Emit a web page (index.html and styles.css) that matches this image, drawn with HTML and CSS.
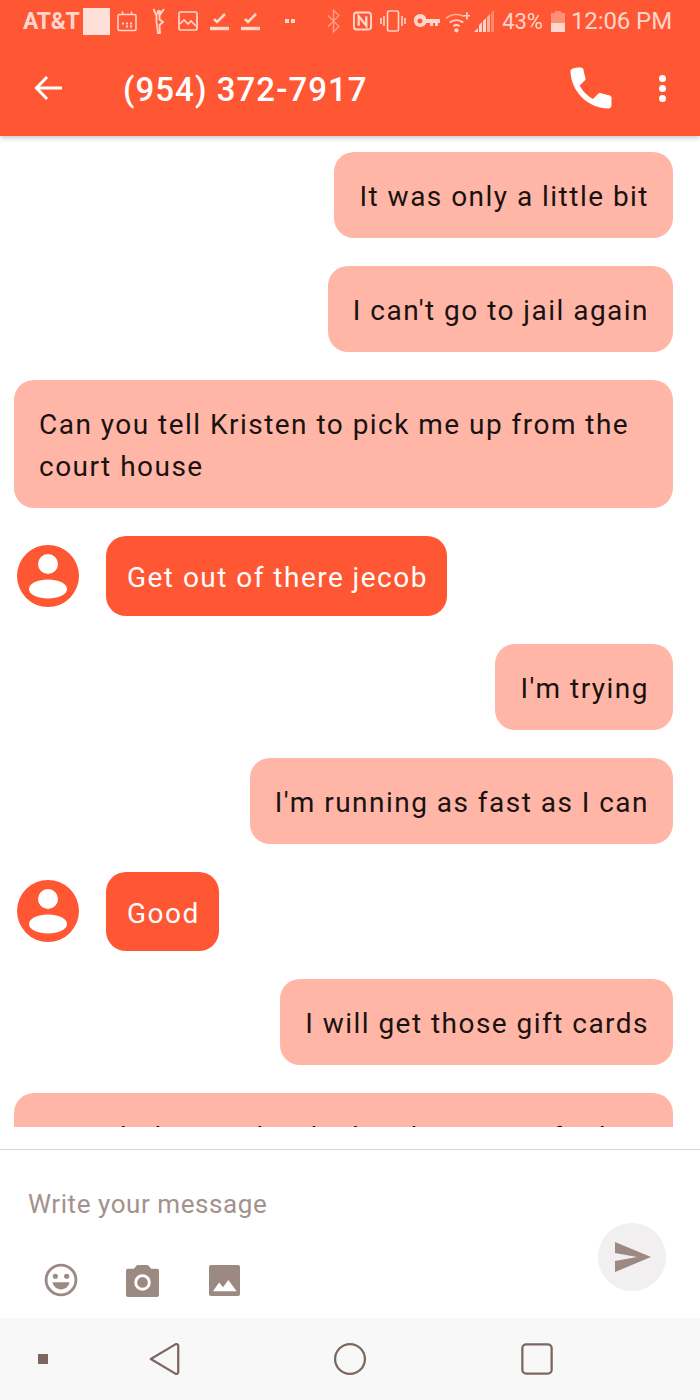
FILE: index.html
```html
<!DOCTYPE html>
<html lang="en">
<head>
<meta charset="utf-8">
<title>(954) 372-7917</title>
<link rel="stylesheet" href="styles.css">
</head>
<body>
<div class="phone">
  <header class="top">
    <div class="status">
      <div class="status-left">
        <span class="carrier">AT&amp;T</span>
        <span class="block"></span>
        <svg class="si s-cal" viewBox="0 0 20 20"><rect x="1" y="3" width="18" height="16" rx="1.500" fill="none" stroke="currentColor" stroke-width="1.500"/><path d="M5.500 0v3.500M14.500 0v3.500" stroke="currentColor" stroke-width="1.500"/><path d="M5 11h2v2H5zM9 11h2v2H9zM13 11h2v2h-2zM9 14h2v2H9zM13 14h2v2h-2z" fill="currentColor"/></svg>
        <svg class="si s-yoga" viewBox="0 0 14 26"><path d="M1.500 1l3 6.500V14l1.500 11h2l-.5-8 3.500-3-3.500-2.500V7.500L12 1" fill="none" stroke="currentColor" stroke-width="1.800"/><circle cx="7" cy="4.500" r="2.400" fill="currentColor"/></svg>
        <svg class="si s-pic" viewBox="0 0 20 20"><rect x="1" y="1" width="18" height="18" rx="1.500" fill="none" stroke="currentColor" stroke-width="1.700"/><path d="M2 13l4-4 4 4 3-3 5 5" fill="none" stroke="currentColor" stroke-width="1.700"/></svg>
        <svg class="si s-check" viewBox="0 0 19 20"><path d="M4 8l3 3 8-8" fill="none" stroke="currentColor" stroke-width="2.600"/><path d="M0 17.500h19" stroke="currentColor" stroke-width="3.400"/></svg>
        <svg class="si s-check" viewBox="0 0 19 20"><path d="M4 8l3 3 8-8" fill="none" stroke="currentColor" stroke-width="2.600"/><path d="M0 17.500h19" stroke="currentColor" stroke-width="3.400"/></svg>
        <span class="dots"><i></i><i></i></span>
      </div>
      <div class="status-right">
        <svg class="si s-bt" viewBox="0 0 12 22"><path d="M1 6l10 10-5 5V1l5 5L1 16" fill="none" stroke="currentColor" stroke-width="1.300" opacity=".55"/></svg>
        <svg class="si s-nfc" viewBox="0 0 20 20"><rect x="1" y="1" width="18" height="18" rx="3" fill="none" stroke="currentColor" stroke-width="2"/><path d="M6 15V5l8 10V5" fill="none" stroke="currentColor" stroke-width="2.400"/></svg>
        <svg class="si s-vib" viewBox="0 0 26 22"><rect x="7.500" y="1" width="11" height="20" rx="1.500" fill="none" stroke="currentColor" stroke-width="1.600"/><path d="M4 6v10M1 8v6M22 6v10M25 8v6" stroke="currentColor" stroke-width="1.600"/></svg>
        <svg class="si s-key" viewBox="0 0 27 14"><path d="M7 0a6.500 6.500 0 0 1 6.300 5H27v4h-2v3h-3V9h-2v3h-3V9h-3.700A6.500 6.500 0 1 1 7 0zm0 4.500a2.500 2.500 0 1 0 0 5 2.500 2.500 0 0 0 0-5z" fill="currentColor" fill-rule="evenodd"/></svg>
        <svg class="si s-wifi" viewBox="0 0 24 22"><path d="M1 8a15 15 0 0 1 17-2" fill="none" stroke="currentColor" stroke-width="1.400" opacity=".7"/><path d="M4.500 12a10 10 0 0 1 13 0" fill="none" stroke="currentColor" stroke-width="1.700"/><path d="M8 15.500a5 5 0 0 1 6 0" fill="none" stroke="currentColor" stroke-width="1.700"/><circle cx="11" cy="19.500" r="2" fill="currentColor"/><path d="M21 2v7M17.500 5.500h7" stroke="currentColor" stroke-width="1.600"/></svg>
        <svg class="si s-sig" viewBox="0 0 22 22"><path d="M0 22l4-4v4zM5 22v-7l3-3v10zM9 22V11l3-3v14z" fill="currentColor"/><path d="M13 22V7l3-3v18z" fill="currentColor" opacity=".7"/><path d="M17 22V3l3-3v22z" fill="currentColor" opacity=".4"/></svg>
        <span class="pct">43%</span>
        <svg class="si s-bat" viewBox="0 0 14 21"><path d="M4 0h6v2h4v19H0V2h4z" fill="currentColor" opacity=".45"/><path d="M0 12h14v9H0z" fill="currentColor"/></svg>
        <span class="time">12:06 PM</span>
      </div>
    </div>
    <div class="bar">
      <svg class="ic-back" viewBox="0 0 28 26"><path d="M28 13H3M13 2L2.500 13 13 24" fill="none" stroke="#fff" stroke-width="3"/></svg>
      <h1 class="title">(954) 372-7917</h1>
      <svg class="ic-phone" viewBox="0 0 42 42"><path d="M10.500 0.500C7 0.500 1 1 0.500 3.500C0.500 24 18 41.500 38.500 41.500C41 41.500 41.500 39.500 41.500 37V30.800C41.500 29.500 40.500 28.500 39 28.200C36 27.700 33.500 27.200 31 26.300C29.800 25.900 28.800 26.200 28 27L23 32C17.500 29 12.500 24 9.700 18.500L14.800 13.500C15.500 12.800 15.800 11.800 15.400 10.800C14.500 8.300 14 5.500 13.500 2.800C13.300 1.400 12 0.500 10.500 0.500Z" fill="#fff"/></svg>
      <span class="kebab"><i></i><i></i><i></i></span>
    </div>
  </header>

  <main class="thread">
    <div class="msg out">It was only a little bit</div>
    <div class="msg out">I can't go to jail again</div>
    <div class="msg out">Can you tell Kristen to pick me up from the court house</div>
    <div class="row">
      <svg class="avatar" viewBox="0 0 62 62"><circle cx="31" cy="31" r="31" fill="#ff5733"/><circle cx="31" cy="19" r="10" fill="#fff"/><ellipse cx="31" cy="44" rx="19" ry="9.500" fill="#fff"/></svg>
      <div class="msg in">Get out of there jecob</div>
    </div>
    <div class="msg out">I'm trying</div>
    <div class="msg out">I'm running as fast as I can</div>
    <div class="row">
      <svg class="avatar" viewBox="0 0 62 62"><circle cx="31" cy="31" r="31" fill="#ff5733"/><circle cx="31" cy="19" r="10" fill="#fff"/><ellipse cx="31" cy="44" rx="19" ry="9.500" fill="#fff"/></svg>
      <div class="msg in">Good</div>
    </div>
    <div class="msg out">I will get those gift cards</div>
    <div class="msg out">I was hiding under the bus because of it but I will be out soon</div>
  </main>

  <section class="composer">
    <div class="placeholder">Write your message</div>
    <div class="tools">
      <svg class="t-emoji" viewBox="0 0 36 36"><circle cx="18" cy="18" r="15.800" fill="none" stroke="#9c8a82" stroke-width="3"/><circle cx="12" cy="14" r="2.700" fill="#9c8a82"/><circle cx="24" cy="14" r="2.700" fill="#9c8a82"/><path d="M9 20.500h18c-.8 4.500-4.500 7.500-9 7.500s-8.200-3-9-7.500z" fill="#9c8a82"/></svg>
      <svg class="t-cam" viewBox="0 0 36 34"><path d="M12.500 1h11L27 5h6a2 2 0 0 1 2 2v25a2 2 0 0 1-2 2H3a2 2 0 0 1-2-2V7a2 2 0 0 1 2-2h6z" fill="#9c8a82"/><circle cx="18" cy="19" r="7" fill="none" stroke="#fff" stroke-width="3"/></svg>
      <svg class="t-pic" viewBox="0 0 32 32"><rect width="32" height="32" rx="2" fill="#9c8a82"/><path d="M4 27l6.500-9 4 5 5.500-7.500L28.500 27z" fill="#fff"/></svg>
    </div>
    <div class="send">
      <svg class="send-ic" viewBox="0 0 36 30"><path d="M0 0l36 15L0 30V19l22-4L0 11z" fill="#9c8a82"/></svg>
    </div>
  </section>

  <nav class="softkeys">
    <span class="pin"></span>
    <svg class="nav-ic n-back" viewBox="0 0 36 36"><path d="M3 18L29 2.500c1.500-.8 3 0 3 1.500v28c0 1.500-1.500 2.300-3 1.500z" fill="none" stroke="#7d6660" stroke-width="2.400" stroke-linejoin="round"/></svg>
    <svg class="nav-ic n-home" viewBox="0 0 36 36"><circle cx="18" cy="18" r="15.800" fill="none" stroke="#7d6660" stroke-width="2.400"/></svg>
    <svg class="nav-ic" viewBox="0 0 36 36"><rect x="2.500" y="2.500" width="31" height="31" rx="4" fill="none" stroke="#7d6660" stroke-width="2.400"/></svg>
  </nav>
</div>
</body>
</html>
```
FILE: styles.css
```css
* { box-sizing: border-box; }
html, body { margin: 0; padding: 0; }
body { width: 700px; height: 1400px; overflow: hidden; background: #fff; font-family: Roboto, sans-serif; }
.phone { width: 700px; height: 1400px; display: flex; flex-direction: column; }

.top { height: 136px; flex: none; background: #ff5733; color: #ffd6cb; box-shadow: 0 2px 5px rgba(0,0,0,.22); position: relative; z-index: 2; }
.status { height: 42px; display: flex; justify-content: space-between; align-items: center; padding: 0 28px 0 23px; }
.status-left, .status-right { display: flex; align-items: center; }
.si { display: block; flex: none; }
.carrier { font-size: 23px; font-weight: 700; letter-spacing: -.3px; width: 60px; color: #ffd6cb; white-space: nowrap; }
.block { width: 27px; height: 27px; background: #ffe0d8; }
.s-cal { width: 20px; height: 21px; margin-left: 7px; }
.s-yoga { width: 14px; height: 26px; margin-left: 15px; }
.s-pic { width: 20px; height: 20px; margin-left: 12px; }
.s-check { width: 19px; height: 20px; margin-left: 12px; }
.dots { display: flex; gap: 2px; margin-left: 25px; }
.dots i { width: 4px; height: 4px; background: #ffd6cb; display: block; }
.status-right { margin-left: auto; }
.s-bt { width: 13px; height: 24px; margin-right: 13px; }
.s-nfc { width: 19px; height: 20px; margin-right: 8px; }
.s-vib { width: 26px; height: 22px; margin-right: 7px; }
.s-key { width: 27px; height: 14px; margin-right: 5px; }
.s-wifi { width: 25px; height: 23px; margin-right: 4px; }
.s-sig { width: 22px; height: 22px; margin-right: 6px; }
.pct { font-size: 22px; color: #ffd6cb; }
.s-bat { width: 14px; height: 21px; margin: 0 6px 0 8px; }
.time { font-size: 24px; letter-spacing: -.1px; color: #ffd6cb; }

.bar { height: 94px; display: flex; align-items: center; padding: 0 34px 2px 34px; }
.ic-back { width: 28px; height: 26px; flex: none; }
.title { margin: 4px 0 0 61px; font-size: 33px; font-weight: 500; line-height: 40px; color: #fff; letter-spacing: 1.05px; flex: 1; }
.ic-phone { width: 42px; height: 42px; flex: none; margin-right: 47px; }
.kebab { display: flex; flex-direction: column; gap: 3px; flex: none; }
.kebab i { width: 7px; height: 7px; background: #fff; border-radius: 50%; display: block; }

.thread { height: 991px; flex: none; overflow: hidden; padding: 16px 27px 0 14px; display: flex; flex-direction: column; align-items: flex-end; gap: 28px; }
.msg { font-size: 28px; line-height: 42px; letter-spacing: 1.47px; border-radius: 20px; flex: none; }
.out { background: #ffb6a7; color: #1a1210; padding: 24px 24px 20px 25px; }
.row { align-self: stretch; display: flex; align-items: center; flex: none; }
.avatar { width: 62px; height: 62px; flex: none; margin: 0 27px 0 3px; }
.in { background: #ff5733; color: #fff; padding: 21px 19px 16.5px 21px; }

.composer { height: 191px; flex: none; padding: 22px 0 0; background: linear-gradient(#fff 22px, #d6d6d6 22px, #d6d6d6 23px, #fff 23px); position: relative; }
.placeholder { font-size: 26px; line-height: 34px; color: #a3928b; padding: 38px 0 0 28px; letter-spacing: .56px; height: 72px; }
.tools { display: flex; align-items: center; padding: 42px 0 0 44px; }
.t-emoji { width: 34px; height: 34px; display: block; flex: none; }
.t-cam { width: 35px; height: 33px; display: block; flex: none; margin-left: 47px; }
.t-pic { width: 31px; height: 31px; display: block; flex: none; margin-left: 49px; }
.send { position: absolute; right: 34px; top: 96px; width: 68px; height: 68px; border-radius: 50%; background: #f1efef; display: flex; align-items: center; justify-content: center; }
.send-ic { width: 36px; height: 30px; margin-left: 2px; }

.softkeys { height: 82px; flex: none; background: #f9f8f8; display: flex; align-items: center; padding: 0 0 0 38px; }
.pin { width: 10px; height: 10px; background: #7d6660; display: block; flex: none; margin-right: 100px; }
.nav-ic { width: 34px; height: 34px; display: block; flex: none; }
.n-back { margin-right: 151px; }
.n-home { margin-right: 153px; }
```
